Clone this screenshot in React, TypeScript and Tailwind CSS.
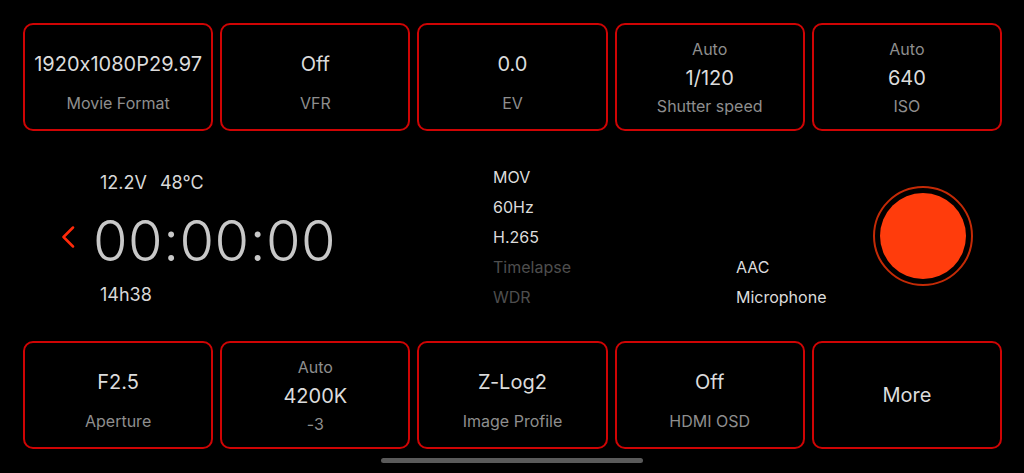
import React from "react";

type Card = { top?: string; value: string; label: string; big?: boolean };

const topCards: Card[] = [
  { value: "1920x1080P29.97", label: "Movie Format" },
  { value: "Off", label: "VFR" },
  { value: "0.0", label: "EV" },
  { top: "Auto", value: "1/120", label: "Shutter speed" },
  { top: "Auto", value: "640", label: "ISO" },
];

const bottomCards: Card[] = [
  { value: "F2.5", label: "Aperture" },
  { top: "Auto", value: "4200K", label: "-3" },
  { value: "Z-Log2", label: "Image Profile" },
  { value: "Off", label: "HDMI OSD" },
  { value: "More", label: "", big: true },
];

function CardBox({ c }: { c: Card }) {
  if (c.big) {
    return (
      <div className="h-[108px] rounded-[10px] border-2 border-[#cf0404] flex items-center justify-center">
        <div className="text-[20px] leading-[28px] text-[#dcdcdc]">{c.value}</div>
      </div>
    );
  }
  if (c.top) {
    return (
      <div className="h-[108px] rounded-[10px] border-2 border-[#cf0404] flex flex-col items-center pt-[10px]">
        <div className="text-[16px] leading-[28.5px] text-[#8e8e8e]">{c.top}</div>
        <div className="text-[20px] leading-[28.5px] text-[#dcdcdc]">{c.value}</div>
        <div className="text-[16px] leading-[28.5px] text-[#8e8e8e]">{c.label}</div>
      </div>
    );
  }
  return (
    <div className="h-[108px] rounded-[10px] border-2 border-[#cf0404] flex flex-col items-center pt-[25px]">
      <div className="text-[20px] leading-[28px] text-[#dcdcdc]">{c.value}</div>
      <div className="h-[11px]" />
      <div className="text-[16px] leading-[28px] text-[#8e8e8e]">{c.label}</div>
    </div>
  );
}

export default function App() {
  return (
    <div
      className="w-[1024px] h-[473px] bg-black flex flex-col overflow-hidden [font-feature-settings:'calt'_0]"
      style={{ fontFamily: "Inter, 'Noto Sans', sans-serif" }}
    >
      <div className="pt-[23px] pl-[23px] pr-[22px] grid grid-cols-5 gap-[7px]">
        {topCards.map((c, i) => (
          <CardBox key={i} c={c} />
        ))}
      </div>

      <div className="h-[210px] flex items-start pl-[61px]">
        <div className="w-[432px] flex items-center self-stretch">
          <svg width="14" height="22" viewBox="0 0 14 22" className="mr-[18px] mt-[1px]">
            <path d="M12 1.5 L2.5 11 L12 20.5" fill="none" stroke="#ff2a0a" strokeWidth="2.5" strokeLinecap="round" strokeLinejoin="round" />
          </svg>
          <div className="flex flex-col self-start pt-[40px]">
            <div className="pl-[7px] text-[18px] leading-[24px] text-[#d8d8d8] flex gap-[13px]">
              <span>12.2V</span>
              <span>48°C</span>
            </div>
            <div className="mt-[12px] text-[56px] leading-[68px] font-light text-[#c8c8c8] tracking-[0.5px]">00:00:00</div>
            <div className="pl-[7px] mt-[8px] text-[18px] leading-[24px] text-[#d8d8d8]">14h38</div>
          </div>
        </div>
        <div className="w-[243px] flex flex-col pt-[31px] text-[16px] leading-[30px]">
          <div className="text-[#dcdcdc]">MOV</div>
          <div className="text-[#dcdcdc]">60Hz</div>
          <div className="text-[#dcdcdc]">H.265</div>
          <div className="text-[#4e4e4e]">Timelapse</div>
          <div className="text-[#4e4e4e]">WDR</div>
        </div>
        <div className="w-[137px] flex flex-col pt-[31px] text-[16px] leading-[30px] text-[#dcdcdc]">
          <div className="h-[30px]" />
          <div className="h-[30px]" />
          <div className="h-[30px]" />
          <div>AAC</div>
          <div>Microphone</div>
        </div>
        <div className="self-center w-[100px] h-[100px] rounded-full border-[2px] border-[#c42a06] flex items-center justify-center">
          <div className="w-[86px] h-[86px] rounded-full bg-[#ff3c0c]" />
        </div>
      </div>

      <div className="pl-[23px] pr-[22px] grid grid-cols-5 gap-[7px]">
        {bottomCards.map((c, i) => (
          <CardBox key={i} c={c} />
        ))}
      </div>

      <div className="flex-1 flex items-start justify-center pt-[9px]">
        <div className="w-[262px] h-[5px] rounded-full bg-[#5a5a5a]" />
      </div>
    </div>
  );
}
